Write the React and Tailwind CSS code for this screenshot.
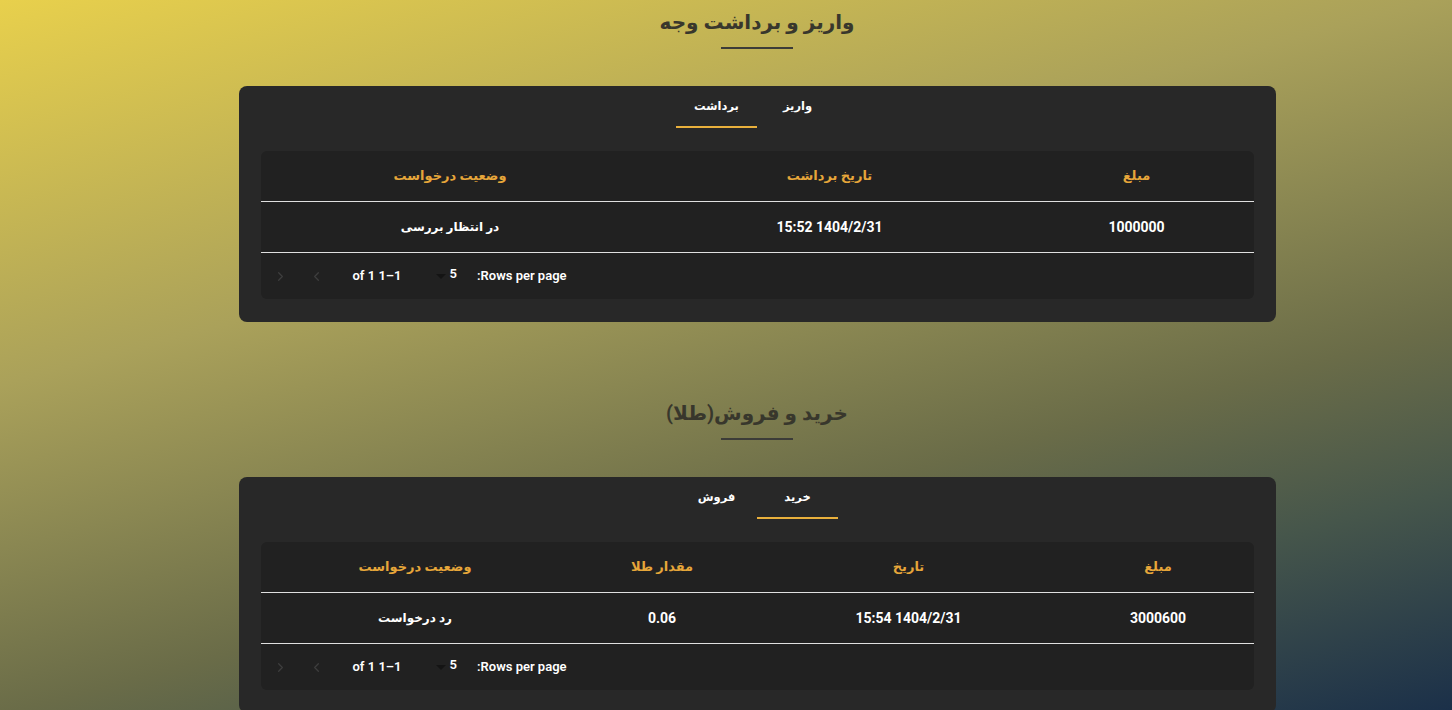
import { ChevronLeft, ChevronRight } from "lucide-react";

const withdrawRows = [{ amount: "1000000", date: "1404/2/31 15:52", status: "در انتظار بررسی" }];
const goldRows = [{ amount: "3000600", date: "1404/2/31 15:54", gold: "0.06", status: "رد درخواست" }];

const SectionTitle = ({ title, className }) => (
  <div className={`flex flex-col items-center ${className}`}>
    <h2 className="text-[20px] leading-8 font-bold text-[#38372c]">{title}</h2>
    <div className="mt-[9px] h-[2px] w-[72px] bg-[#3c3c38]" />
  </div>
);

const Tabs = ({ tabs, active }) => (
  <div className="flex justify-center">
    {tabs.map((tab, i) => (
      <div
        key={tab}
        className="relative flex h-[43px] w-[81px] items-start justify-center pt-[12px] text-[11.5px] font-bold text-white"
      >
        {tab}
        {i === active && <span className="absolute bottom-[1px] left-0 right-0 h-[2px] bg-[#e9b03c]" />}
      </div>
    ))}
  </div>
);

const Pagination = () => (
  <div dir="ltr" className="flex h-[46px] items-center pl-[8px] text-[13px] font-semibold text-white">
    <button className="flex h-[24px] w-[24px] items-center justify-center text-[#3d3d3d]">
      <ChevronRight size={15} strokeWidth={2} />
    </button>
    <button className="ml-[12px] flex h-[24px] w-[24px] items-center justify-center text-[#3d3d3d]">
      <ChevronLeft size={15} strokeWidth={2} />
    </button>
    <span dir="rtl" className="ml-[24px]">1–1 of 1</span>
    <span className="ml-[34px] flex h-[10px] w-[10px] items-center justify-center">
      <svg width="10" height="5" viewBox="0 0 10 5">
        <path d="M0 0 L10 0 L5 5 Z" fill="#141414" />
      </svg>
    </span>
    <span className="ml-[4px] -mt-[4px]">5</span>
    <span dir="rtl" className="ml-[20px]">Rows per page:</span>
  </div>
);

// numbers render larger than the Persian labels in the source
const cellSize = (cell) => (/^[\d\s.:/]+$/.test(cell) ? "text-[14px]" : "text-[12px]");

const DataTable = ({ cols, headers, rows }) => (
  <div className="mt-[22px] overflow-hidden rounded-md bg-[#212121]">
    <div className={`grid h-[51px] items-center border-b border-[#e0e0e0] ${cols}`}>
      {headers.map((h) => (
        <div key={h} className="text-center text-[13px] font-bold text-[#e6a63a]">
          {h}
        </div>
      ))}
    </div>
    {rows.map((row, i) => (
      <div key={i} className={`grid h-[51px] items-center border-b border-[#e0e0e0] ${cols}`}>
        {row.map((cell, j) => (
          <div key={j} className={`text-center font-bold text-white ${cellSize(cell)}`}>
            {cell}
          </div>
        ))}
      </div>
    ))}
    <Pagination />
  </div>
);

const Card = ({ children, className }) => (
  <div className={`mx-auto w-[1037px] rounded-lg bg-[#282828] px-[22px] pb-[23px] ${className}`}>
    {children}
  </div>
);

const App = () => {
  return (
    <div
      dir="rtl"
      className="min-h-screen bg-fixed bg-[linear-gradient(165deg,#e8d04c_0%,#aaa15a_35%,#8a8752_50%,#6a6c48_65%,#46564b_80%,#1b3049_100%)] pb-10 pt-[6px] font-['Roboto','DejaVu_Sans',sans-serif]"
    >
      <div className="pl-[62px]">
        <SectionTitle title="واریز و برداشت وجه" />
        <Card className="mt-[37px]">
          <Tabs tabs={["واریز", "برداشت"]} active={1} />
          <DataTable
            cols="grid-cols-[234px_380px_379px]"
            headers={["مبلغ", "تاریخ برداشت", "وضعیت درخواست"]}
            rows={withdrawRows.map((r) => [r.amount, r.date, r.status])}
          />
        </Card>

        <SectionTitle title="خرید و فروش(طلا)" className="mt-[75px]" />
        <Card className="mt-[37px]">
          <Tabs tabs={["خرید", "فروش"]} active={0} />
          <DataTable
            cols="grid-cols-[191px_308px_185px_309px]"
            headers={["مبلغ", "تاریخ", "مقدار طلا", "وضعیت درخواست"]}
            rows={goldRows.map((r) => [r.amount, r.date, r.gold, r.status])}
          />
        </Card>
      </div>
    </div>
  );
};

export default App;
